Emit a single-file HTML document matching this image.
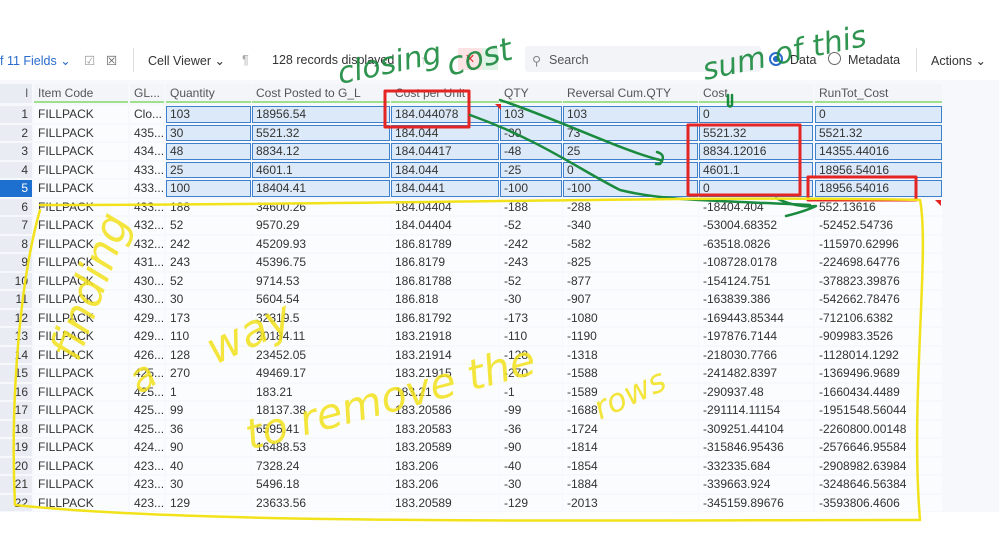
<!DOCTYPE html>
<html><head><meta charset="utf-8"><style>
body{margin:0;width:999px;height:546px;overflow:hidden;background:#fff;font-family:"Liberation Sans",sans-serif;position:relative}
.tb{position:absolute;top:42px;left:0;width:999px;height:36px;font-size:12.5px;color:#333}
.tb span{position:absolute;top:11px}
.grid{position:absolute;left:0;top:80px;width:999px;height:432px;background:#f6f8fb}
.r{position:absolute;left:0;height:18.5px;width:942px}
.c{position:absolute;top:0;height:16.5px;line-height:17px;font-size:12px;color:#333;background:#fbfcfe;box-sizing:border-box;padding-left:4px;white-space:nowrap;overflow:hidden}
.h .c{background:#f3f5f8;color:#555;border-bottom:2px solid #9ee08e;height:19px;line-height:19px;font-size:12px}
.i{text-align:right;padding-right:4px;background:#e9edf3!important}
.s .c{background:#dbe9f8;box-shadow:inset 0 0 0 1px #3f80cc}
.s .c.a,.s .c.b,.s .c.i{box-shadow:none}
.s .c.a,.s .c.b{background:#fbfcfe}
</style></head><body>
<div class="tb">
<span style="left:0;color:#2a6ccc">f 11 Fields &#8964;</span>
<span style="left:84px;color:#999">&#9745;</span><span style="left:106px;color:#666">&#9746;</span>
<span style="left:133px;top:6px;width:1px;height:24px;background:#ddd"></span>
<span style="left:148px">Cell Viewer &#8964;</span>
<span style="left:242px;color:#aaa">&para;</span>
<span style="left:272px">128 records displayed</span>
<span style="left:420px;color:#bbb">&#8593;</span>
<span style="left:458px;top:6px;width:24px;height:22px;background:#fde3e3;color:#e03030;text-align:center;line-height:22px">&#10005;</span>
<span style="left:482px;top:6px;width:16px;height:22px;background:#dff3e6"></span>
<span style="left:525px;top:4px;width:236px;height:26px;background:#f2f4f7;border-radius:3px"></span>
<span style="left:532px;color:#888">&#9906;</span><span style="left:549px;color:#555">Search</span>
<span style="left:769px;top:10px;width:10px;height:10px;border:2px solid #2a6ccc;border-radius:50%;background:radial-gradient(#2a6ccc 40%,#fff 45%)"></span>
<span style="left:790px">Data</span>
<span style="left:828px;top:10px;width:11px;height:11px;border:1.5px solid #666;border-radius:50%"></span>
<span style="left:848px">Metadata</span>
<span style="left:916px;top:6px;width:1px;height:24px;background:#ddd"></span>
<span style="left:931px">Actions &#8964;</span>
</div>
<div class="grid">
<div class="r h" style="top:4px"><div class="c i" style="left:0;width:32px;border:0">l</div><div class="c" style="left:34px;width:94px">Item Code</div><div class="c" style="left:130px;width:34px">GL...</div><div class="c" style="left:166px;width:85px">Quantity</div><div class="c" style="left:252px;width:138px">Cost Posted to G_L</div><div class="c" style="left:391px;width:108px">Cost per Unit</div><div class="c" style="left:500px;width:62px">QTY</div><div class="c" style="left:563px;width:135px">Reversal Cum.QTY</div><div class="c" style="left:699px;width:114px">Cost</div><div class="c" style="left:815px;width:127px">RunTot_Cost</div></div>
</div>
<div style="position:absolute;left:0;top:106px">
<div class="r s" style="top:0"><div class="c i" style="left:0;width:32px">1</div><div class="c a" style="left:34px;width:94px">FILLPACK</div><div class="c b" style="left:130px;width:34px">Clo...</div><div class="c" style="left:166px;width:85px">103</div><div class="c" style="left:252px;width:138px">18956.54</div><div class="c" style="left:391px;width:108px">184.044078</div><div class="c" style="left:500px;width:62px">103</div><div class="c" style="left:563px;width:135px">103</div><div class="c" style="left:699px;width:114px">0</div><div class="c" style="left:815px;width:127px">0</div></div>
<div class="r s" style="top:18.5px"><div class="c i" style="left:0;width:32px">2</div><div class="c a" style="left:34px;width:94px">FILLPACK</div><div class="c b" style="left:130px;width:34px">435...</div><div class="c" style="left:166px;width:85px">30</div><div class="c" style="left:252px;width:138px">5521.32</div><div class="c" style="left:391px;width:108px">184.044</div><div class="c" style="left:500px;width:62px">-30</div><div class="c" style="left:563px;width:135px">73</div><div class="c" style="left:699px;width:114px">5521.32</div><div class="c" style="left:815px;width:127px">5521.32</div></div>
<div class="r s" style="top:37px"><div class="c i" style="left:0;width:32px">3</div><div class="c a" style="left:34px;width:94px">FILLPACK</div><div class="c b" style="left:130px;width:34px">434...</div><div class="c" style="left:166px;width:85px">48</div><div class="c" style="left:252px;width:138px">8834.12</div><div class="c" style="left:391px;width:108px">184.04417</div><div class="c" style="left:500px;width:62px">-48</div><div class="c" style="left:563px;width:135px">25</div><div class="c" style="left:699px;width:114px">8834.12016</div><div class="c" style="left:815px;width:127px">14355.44016</div></div>
<div class="r s" style="top:55.5px"><div class="c i" style="left:0;width:32px">4</div><div class="c a" style="left:34px;width:94px">FILLPACK</div><div class="c b" style="left:130px;width:34px">433...</div><div class="c" style="left:166px;width:85px">25</div><div class="c" style="left:252px;width:138px">4601.1</div><div class="c" style="left:391px;width:108px">184.044</div><div class="c" style="left:500px;width:62px">-25</div><div class="c" style="left:563px;width:135px">0</div><div class="c" style="left:699px;width:114px">4601.1</div><div class="c" style="left:815px;width:127px">18956.54016</div></div>
<div class="r s" style="top:74px"><div class="c i" style="left:0;width:32px;background:#1d6fd0!important;color:#fff">5</div><div class="c a" style="left:34px;width:94px">FILLPACK</div><div class="c b" style="left:130px;width:34px">433...</div><div class="c" style="left:166px;width:85px">100</div><div class="c" style="left:252px;width:138px">18404.41</div><div class="c" style="left:391px;width:108px">184.0441</div><div class="c" style="left:500px;width:62px">-100</div><div class="c" style="left:563px;width:135px">-100</div><div class="c" style="left:699px;width:114px">0</div><div class="c" style="left:815px;width:127px">18956.54016</div></div>
<div class="r" style="top:92.5px"><div class="c i" style="left:0;width:32px">6</div><div class="c" style="left:34px;width:94px">FILLPACK</div><div class="c" style="left:130px;width:34px">433...</div><div class="c" style="left:166px;width:85px">188</div><div class="c" style="left:252px;width:138px">34600.26</div><div class="c" style="left:391px;width:108px">184.04404</div><div class="c" style="left:500px;width:62px">-188</div><div class="c" style="left:563px;width:135px">-288</div><div class="c" style="left:699px;width:114px">-18404.404</div><div class="c" style="left:815px;width:127px">552.13616</div></div>
<div class="r" style="top:111px"><div class="c i" style="left:0;width:32px">7</div><div class="c" style="left:34px;width:94px">FILLPACK</div><div class="c" style="left:130px;width:34px">432...</div><div class="c" style="left:166px;width:85px">52</div><div class="c" style="left:252px;width:138px">9570.29</div><div class="c" style="left:391px;width:108px">184.04404</div><div class="c" style="left:500px;width:62px">-52</div><div class="c" style="left:563px;width:135px">-340</div><div class="c" style="left:699px;width:114px">-53004.68352</div><div class="c" style="left:815px;width:127px">-52452.54736</div></div>
<div class="r" style="top:129.5px"><div class="c i" style="left:0;width:32px">8</div><div class="c" style="left:34px;width:94px">FILLPACK</div><div class="c" style="left:130px;width:34px">432...</div><div class="c" style="left:166px;width:85px">242</div><div class="c" style="left:252px;width:138px">45209.93</div><div class="c" style="left:391px;width:108px">186.81789</div><div class="c" style="left:500px;width:62px">-242</div><div class="c" style="left:563px;width:135px">-582</div><div class="c" style="left:699px;width:114px">-63518.0826</div><div class="c" style="left:815px;width:127px">-115970.62996</div></div>
<div class="r" style="top:148px"><div class="c i" style="left:0;width:32px">9</div><div class="c" style="left:34px;width:94px">FILLPACK</div><div class="c" style="left:130px;width:34px">431...</div><div class="c" style="left:166px;width:85px">243</div><div class="c" style="left:252px;width:138px">45396.75</div><div class="c" style="left:391px;width:108px">186.8179</div><div class="c" style="left:500px;width:62px">-243</div><div class="c" style="left:563px;width:135px">-825</div><div class="c" style="left:699px;width:114px">-108728.0178</div><div class="c" style="left:815px;width:127px">-224698.64776</div></div>
<div class="r" style="top:166.5px"><div class="c i" style="left:0;width:32px">10</div><div class="c" style="left:34px;width:94px">FILLPACK</div><div class="c" style="left:130px;width:34px">430...</div><div class="c" style="left:166px;width:85px">52</div><div class="c" style="left:252px;width:138px">9714.53</div><div class="c" style="left:391px;width:108px">186.81788</div><div class="c" style="left:500px;width:62px">-52</div><div class="c" style="left:563px;width:135px">-877</div><div class="c" style="left:699px;width:114px">-154124.751</div><div class="c" style="left:815px;width:127px">-378823.39876</div></div>
<div class="r" style="top:185px"><div class="c i" style="left:0;width:32px">11</div><div class="c" style="left:34px;width:94px">FILLPACK</div><div class="c" style="left:130px;width:34px">430...</div><div class="c" style="left:166px;width:85px">30</div><div class="c" style="left:252px;width:138px">5604.54</div><div class="c" style="left:391px;width:108px">186.818</div><div class="c" style="left:500px;width:62px">-30</div><div class="c" style="left:563px;width:135px">-907</div><div class="c" style="left:699px;width:114px">-163839.386</div><div class="c" style="left:815px;width:127px">-542662.78476</div></div>
<div class="r" style="top:203.5px"><div class="c i" style="left:0;width:32px">12</div><div class="c" style="left:34px;width:94px">FILLPACK</div><div class="c" style="left:130px;width:34px">429...</div><div class="c" style="left:166px;width:85px">173</div><div class="c" style="left:252px;width:138px">32319.5</div><div class="c" style="left:391px;width:108px">186.81792</div><div class="c" style="left:500px;width:62px">-173</div><div class="c" style="left:563px;width:135px">-1080</div><div class="c" style="left:699px;width:114px">-169443.85344</div><div class="c" style="left:815px;width:127px">-712106.6382</div></div>
<div class="r" style="top:222px"><div class="c i" style="left:0;width:32px">13</div><div class="c" style="left:34px;width:94px">FILLPACK</div><div class="c" style="left:130px;width:34px">429...</div><div class="c" style="left:166px;width:85px">110</div><div class="c" style="left:252px;width:138px">20184.11</div><div class="c" style="left:391px;width:108px">183.21918</div><div class="c" style="left:500px;width:62px">-110</div><div class="c" style="left:563px;width:135px">-1190</div><div class="c" style="left:699px;width:114px">-197876.7144</div><div class="c" style="left:815px;width:127px">-909983.3526</div></div>
<div class="r" style="top:240.5px"><div class="c i" style="left:0;width:32px">14</div><div class="c" style="left:34px;width:94px">FILLPACK</div><div class="c" style="left:130px;width:34px">426...</div><div class="c" style="left:166px;width:85px">128</div><div class="c" style="left:252px;width:138px">23452.05</div><div class="c" style="left:391px;width:108px">183.21914</div><div class="c" style="left:500px;width:62px">-128</div><div class="c" style="left:563px;width:135px">-1318</div><div class="c" style="left:699px;width:114px">-218030.7766</div><div class="c" style="left:815px;width:127px">-1128014.1292</div></div>
<div class="r" style="top:259px"><div class="c i" style="left:0;width:32px">15</div><div class="c" style="left:34px;width:94px">FILLPACK</div><div class="c" style="left:130px;width:34px">425...</div><div class="c" style="left:166px;width:85px">270</div><div class="c" style="left:252px;width:138px">49469.17</div><div class="c" style="left:391px;width:108px">183.21915</div><div class="c" style="left:500px;width:62px">-270</div><div class="c" style="left:563px;width:135px">-1588</div><div class="c" style="left:699px;width:114px">-241482.8397</div><div class="c" style="left:815px;width:127px">-1369496.9689</div></div>
<div class="r" style="top:277.5px"><div class="c i" style="left:0;width:32px">16</div><div class="c" style="left:34px;width:94px">FILLPACK</div><div class="c" style="left:130px;width:34px">425...</div><div class="c" style="left:166px;width:85px">1</div><div class="c" style="left:252px;width:138px">183.21</div><div class="c" style="left:391px;width:108px">183.21</div><div class="c" style="left:500px;width:62px">-1</div><div class="c" style="left:563px;width:135px">-1589</div><div class="c" style="left:699px;width:114px">-290937.48</div><div class="c" style="left:815px;width:127px">-1660434.4489</div></div>
<div class="r" style="top:296px"><div class="c i" style="left:0;width:32px">17</div><div class="c" style="left:34px;width:94px">FILLPACK</div><div class="c" style="left:130px;width:34px">425...</div><div class="c" style="left:166px;width:85px">99</div><div class="c" style="left:252px;width:138px">18137.38</div><div class="c" style="left:391px;width:108px">183.20586</div><div class="c" style="left:500px;width:62px">-99</div><div class="c" style="left:563px;width:135px">-1688</div><div class="c" style="left:699px;width:114px">-291114.11154</div><div class="c" style="left:815px;width:127px">-1951548.56044</div></div>
<div class="r" style="top:314.5px"><div class="c i" style="left:0;width:32px">18</div><div class="c" style="left:34px;width:94px">FILLPACK</div><div class="c" style="left:130px;width:34px">425...</div><div class="c" style="left:166px;width:85px">36</div><div class="c" style="left:252px;width:138px">6595.41</div><div class="c" style="left:391px;width:108px">183.20583</div><div class="c" style="left:500px;width:62px">-36</div><div class="c" style="left:563px;width:135px">-1724</div><div class="c" style="left:699px;width:114px">-309251.44104</div><div class="c" style="left:815px;width:127px">-2260800.00148</div></div>
<div class="r" style="top:333px"><div class="c i" style="left:0;width:32px">19</div><div class="c" style="left:34px;width:94px">FILLPACK</div><div class="c" style="left:130px;width:34px">424...</div><div class="c" style="left:166px;width:85px">90</div><div class="c" style="left:252px;width:138px">16488.53</div><div class="c" style="left:391px;width:108px">183.20589</div><div class="c" style="left:500px;width:62px">-90</div><div class="c" style="left:563px;width:135px">-1814</div><div class="c" style="left:699px;width:114px">-315846.95436</div><div class="c" style="left:815px;width:127px">-2576646.95584</div></div>
<div class="r" style="top:351.5px"><div class="c i" style="left:0;width:32px">20</div><div class="c" style="left:34px;width:94px">FILLPACK</div><div class="c" style="left:130px;width:34px">423...</div><div class="c" style="left:166px;width:85px">40</div><div class="c" style="left:252px;width:138px">7328.24</div><div class="c" style="left:391px;width:108px">183.206</div><div class="c" style="left:500px;width:62px">-40</div><div class="c" style="left:563px;width:135px">-1854</div><div class="c" style="left:699px;width:114px">-332335.684</div><div class="c" style="left:815px;width:127px">-2908982.63984</div></div>
<div class="r" style="top:370px"><div class="c i" style="left:0;width:32px">21</div><div class="c" style="left:34px;width:94px">FILLPACK</div><div class="c" style="left:130px;width:34px">423...</div><div class="c" style="left:166px;width:85px">30</div><div class="c" style="left:252px;width:138px">5496.18</div><div class="c" style="left:391px;width:108px">183.206</div><div class="c" style="left:500px;width:62px">-30</div><div class="c" style="left:563px;width:135px">-1884</div><div class="c" style="left:699px;width:114px">-339663.924</div><div class="c" style="left:815px;width:127px">-3248646.56384</div></div>
<div class="r" style="top:388.5px"><div class="c i" style="left:0;width:32px">22</div><div class="c" style="left:34px;width:94px">FILLPACK</div><div class="c" style="left:130px;width:34px">423...</div><div class="c" style="left:166px;width:85px">129</div><div class="c" style="left:252px;width:138px">23633.56</div><div class="c" style="left:391px;width:108px">183.20589</div><div class="c" style="left:500px;width:62px">-129</div><div class="c" style="left:563px;width:135px">-2013</div><div class="c" style="left:699px;width:114px">-345159.89676</div><div class="c" style="left:815px;width:127px">-3593806.4606</div></div>
</div>
<svg style="position:absolute;left:0;top:0" width="999" height="546" fill="none" stroke-linecap="round" stroke-linejoin="round">
<g stroke="#e52424" stroke-width="3">
<rect x="385" y="91" width="84" height="36"/>
<rect x="688" y="125" width="112" height="70"/>
<rect x="808" y="177" width="108" height="23"/>
</g>
<g stroke="#1a8a3e" stroke-width="2.5">
<path d="M500 100 C560 120 620 150 660 160"/>
<path d="M470 115 C540 140 580 170 620 190 C660 200 700 200 810 205"/>
<path d="M657 152 q10 3 3 12 l-4 0"/>
<path d="M776 198 q20 10 40 8 q-10 5 -30 10"/>
<path d="M728 95 v10 q2 3 4 0 v-10"/>
</g>
<g fill="#1a8a3e" font-family="'DejaVu Sans',sans-serif" font-style="italic" opacity="0.9">
<text x="340" y="84" font-size="30" transform="rotate(-12 340 84)">closing</text>
<text x="450" y="76" font-size="32" transform="rotate(-15 450 76)">cost</text>
<text x="705" y="80" font-size="30" transform="rotate(-12 705 80)">sum of this</text>
</g>
<g stroke="#f2e21a" stroke-width="2.5">
<path d="M40 210 C20 280 10 400 15 505 C200 525 600 520 920 520 C910 400 930 250 920 200 C700 195 400 205 40 205"/>
</g>
<g fill="#f2e21a" font-family="'DejaVu Sans',sans-serif" font-style="italic" opacity="0.85">
<text x="55" y="330" font-size="44" transform="rotate(-70 90 330)">finding</text>
<text x="140" y="395" font-size="40" transform="rotate(-35 140 395)">a</text>
<text x="215" y="365" font-size="44" transform="rotate(-25 215 365)">way</text>
<text x="250" y="450" font-size="42" transform="rotate(-15 250 450)">to remove the</text>
<text x="600" y="420" font-size="32" transform="rotate(-25 600 420)">rows</text>
</g>
<path d="M495 104 l6 0 l0 6z M935 200 l6 0 l0 6z" fill="#e52424"/>
</svg>
</body></html>
